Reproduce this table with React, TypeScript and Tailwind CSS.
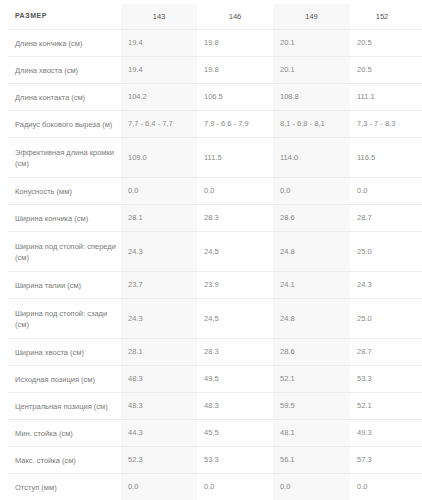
import React from "react";

type Row = { label: React.ReactNode; values: string[]; tall?: boolean };

const rows: Row[] = [
  { label: "Длина кончика (см)", values: ["19.4", "19.8", "20.1", "20.5"] },
  { label: "Длина хвоста (см)", values: ["19.4", "19.8", "20.1", "20.5"] },
  { label: "Длина контакта (см)", values: ["104.2", "106.5", "108.8", "111.1"] },
  { label: "Радиус бокового выреза (м)", values: ["7,7 - 6,4 - 7,7", "7,9 - 6,6 - 7,9", "8,1 - 6,8 - 8,1", "7,3 - 7 - 8,3"] },
  { label: <>Эффективная длина кромки<br />(см)</>, values: ["109.0", "111.5", "114.0", "116.5"], tall: true },
  { label: "Конусность (мм)", values: ["0.0", "0.0", "0.0", "0.0"] },
  { label: "Ширина кончика (см)", values: ["28.1", "28.3", "28.6", "28.7"] },
  { label: <>Ширина под стопой: спереди<br />(см)</>, values: ["24.3", "24,5", "24.8", "25.0"], tall: true },
  { label: "Ширина талии (см)", values: ["23.7", "23.9", "24.1", "24.3"] },
  { label: <>Ширина под стопой: сзади<br />(см)</>, values: ["24.3", "24,5", "24.8", "25.0"], tall: true },
  { label: "Ширина хвоста (см)", values: ["28.1", "28.3", "28.6", "28.7"] },
  { label: "Исходная позиция (см)", values: ["48.3", "49,5", "52.1", "53.3"] },
  { label: "Центральная позиция (см)", values: ["48.3", "48.3", "59.5", "52.1"] },
  { label: "Мин. стойка (см)", values: ["44.3", "45,5", "48.1", "49.3"] },
  { label: "Макс. стойка (см)", values: ["52.3", "53.3", "56.1", "57.3"] },
  { label: "Отступ (мм)", values: ["0.0", "0.0", "0.0", "0.0"] },
];

const grid = "grid grid-cols-[113px_76px_76px_77px_1fr]";
const shade = ["bg-[#f8f8f8]", "", "bg-[#f8f8f8]", ""];

export default function App() {
  return (
    <div
      className="w-[422px] h-[500px] overflow-hidden bg-white pt-[4px] pl-[8px]"
      style={{ fontFamily: "'Liberation Sans', Arial, sans-serif" }}
    >
      <div className={`${grid} h-[26px] border-b border-[#ececec] items-stretch`}>
        <div className="flex items-center pl-[7px] text-[7px] font-bold tracking-[0.08em] text-[#555]">
          РАЗМЕР
        </div>
        {["143", "146", "149", "152"].map((s, i) => (
          <div
            key={s}
            className={`flex items-center justify-center text-[7.5px] text-[#555] ${shade[i]} ${i === 3 ? "pr-[8px]" : ""}`}
          >
            {s}
          </div>
        ))}
      </div>
      {rows.map((r, idx) => (
        <div
          key={idx}
          className={`${grid} ${r.tall ? "h-[40px]" : "h-[27px]"} border-b border-[#ececec] items-stretch`}
        >
          <div className="flex items-center pl-[7px] text-[7.5px] leading-[11px] text-[#7a7a7a] whitespace-nowrap">
            <span>{r.label}</span>
          </div>
          {r.values.map((v, i) => (
            <div
              key={i}
              className={`flex items-center pl-[7px] text-[7.5px] text-[#8a8a8a] whitespace-nowrap ${shade[i]}`}
            >
              {v}
            </div>
          ))}
        </div>
      ))}
    </div>
  );
}
